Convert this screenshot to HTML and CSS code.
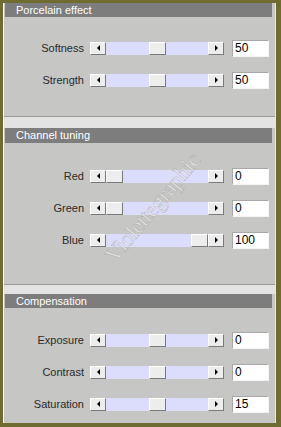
FILE: index.html
```html
<!DOCTYPE html>
<html lang="en">
<head>
    <meta charset="UTF-8">
    <meta name="viewport" content="width=device-width, initial-scale=1.0">
    <title>Porcelain effect</title>
    <link rel="stylesheet" href="styles.css">
</head>
<body>
    <div class="dialog">
        <section class="group group-first">
            <h2 class="group-title">Porcelain effect</h2>
            <div class="row">
                <label>Softness</label>
                <div class="scroll">
                    <span class="btn btn-left"></span>
                    <div class="track"><span class="thumb" style="--pos:50"></span></div>
                    <span class="btn btn-right"></span>
                </div>
                <input type="text" value="50">
            </div>
            <div class="row">
                <label>Strength</label>
                <div class="scroll">
                    <span class="btn btn-left"></span>
                    <div class="track"><span class="thumb" style="--pos:50"></span></div>
                    <span class="btn btn-right"></span>
                </div>
                <input type="text" value="50">
            </div>
        </section>

        <section class="group group-second">
            <h2 class="group-title">Channel tuning</h2>
            <div class="row">
                <label>Red</label>
                <div class="scroll">
                    <span class="btn btn-left"></span>
                    <div class="track"><span class="thumb" style="--pos:0"></span></div>
                    <span class="btn btn-right"></span>
                </div>
                <input type="text" value="0">
            </div>
            <div class="row">
                <label>Green</label>
                <div class="scroll">
                    <span class="btn btn-left"></span>
                    <div class="track"><span class="thumb" style="--pos:0"></span></div>
                    <span class="btn btn-right"></span>
                </div>
                <input type="text" value="0">
            </div>
            <div class="row">
                <label>Blue</label>
                <div class="scroll">
                    <span class="btn btn-left"></span>
                    <div class="track"><span class="thumb" style="--pos:100"></span></div>
                    <span class="btn btn-right"></span>
                </div>
                <input type="text" value="100">
            </div>
        </section>

        <section class="group group-last">
            <h2 class="group-title">Compensation</h2>
            <div class="row">
                <label>Exposure</label>
                <div class="scroll">
                    <span class="btn btn-left"></span>
                    <div class="track"><span class="thumb" style="--pos:50"></span></div>
                    <span class="btn btn-right"></span>
                </div>
                <input type="text" value="0">
            </div>
            <div class="row">
                <label>Contrast</label>
                <div class="scroll">
                    <span class="btn btn-left"></span>
                    <div class="track"><span class="thumb" style="--pos:50"></span></div>
                    <span class="btn btn-right"></span>
                </div>
                <input type="text" value="0">
            </div>
            <div class="row">
                <label>Saturation</label>
                <div class="scroll">
                    <span class="btn btn-left"></span>
                    <div class="track"><span class="thumb" style="--pos:50"></span></div>
                    <span class="btn btn-right"></span>
                </div>
                <input type="text" value="15">
            </div>
        </section>

        <div class="watermark">Violettegraphic</div>
    </div>
</body>
</html>
```

FILE: styles.css
```css
/* Page frame */
body {
    margin: 0;
    background: #6f6c31;
    font-family: "Liberation Sans", Arial, sans-serif;
    font-size: 11px;
    color: #2a2a2a;
}

.dialog {
    position: relative;
    display: flex;
    flex-direction: column;
    height: 420px;
    margin: 3px 5px 4px 3px;
    background: #e3e3e3;
    border-left: 1px solid #f6f6f6;
    border-right: 1px solid #e6e6e6;
    overflow: hidden;
}

/* Groups */
.group {
    background: #c6c6c4;
    border-bottom: 1px solid #9a9a9a;
}

.group-title {
    margin: 0 3px 0 1px;
    height: 14px;
    line-height: 14px;
    padding-left: 11px;
    background: #7d7d7d;
    color: #fff;
    font-size: 11px;
    font-weight: normal;
}

.group-first {
    padding-bottom: 20px;
}

.group-first .group-title {
    margin-bottom: 15px;
}

.group-second {
    margin-top: 11px;
    padding-bottom: 28px;
}

.group-second .group-title {
    height: 15px;
    line-height: 15px;
    margin-bottom: 17px;
}

.group-last {
    flex: 1;
    margin-top: 9px;
    border-bottom: none;
}

.group-last .group-title {
    margin-bottom: 16px;
}

/* Slider rows */
.row {
    display: flex;
    align-items: center;
    height: 32px;
}

.row label {
    width: 80px;
    margin-right: 6px;
    text-align: right;
}

.scroll {
    display: flex;
    width: 134px;
    height: 13px;
}

.btn,
.thumb {
    box-sizing: border-box;
    height: 13px;
    background: #ededed;
    border: 1px solid;
    border-color: #fff #7a7a7a #7a7a7a #fff;
}

.btn {
    display: flex;
    align-items: center;
    justify-content: center;
    width: 16px;
}

.btn::before {
    content: "";
    border-top: 3px solid transparent;
    border-bottom: 3px solid transparent;
}

.btn-left::before {
    border-right: 3px solid #000;
}

.btn-right::before {
    border-left: 3px solid #000;
}

.track {
    flex: 1;
    display: flex;
    background: #dcdcfc;
}

.thumb {
    width: 17px;
    margin-left: calc(var(--pos) * 0.85px);
}

.row input {
    box-sizing: border-box;
    width: 37px;
    height: 17px;
    margin: 0 0 0 8px;
    padding: 0 2px;
    background: #fff;
    border: 1px solid;
    border-color: #a8a8a8 #f4f4f4 #f4f4f4 #a8a8a8;
    font-family: "Liberation Sans", Arial, sans-serif;
    font-size: 12px;
    color: #000;
    outline: none;
}

/* Watermark over the dialog */
.watermark {
    position: absolute;
    left: 59px;
    top: 193px;
    width: 180px;
    line-height: 24px;
    text-align: center;
    font-family: "Liberation Serif", serif;
    font-size: 23px;
    letter-spacing: -0.5px;
    color: rgba(244, 244, 244, 0.6);
    -webkit-text-stroke: 0.5px rgba(150, 150, 150, 0.6);
    transform: rotate(-50deg);
    pointer-events: none;
}
```
